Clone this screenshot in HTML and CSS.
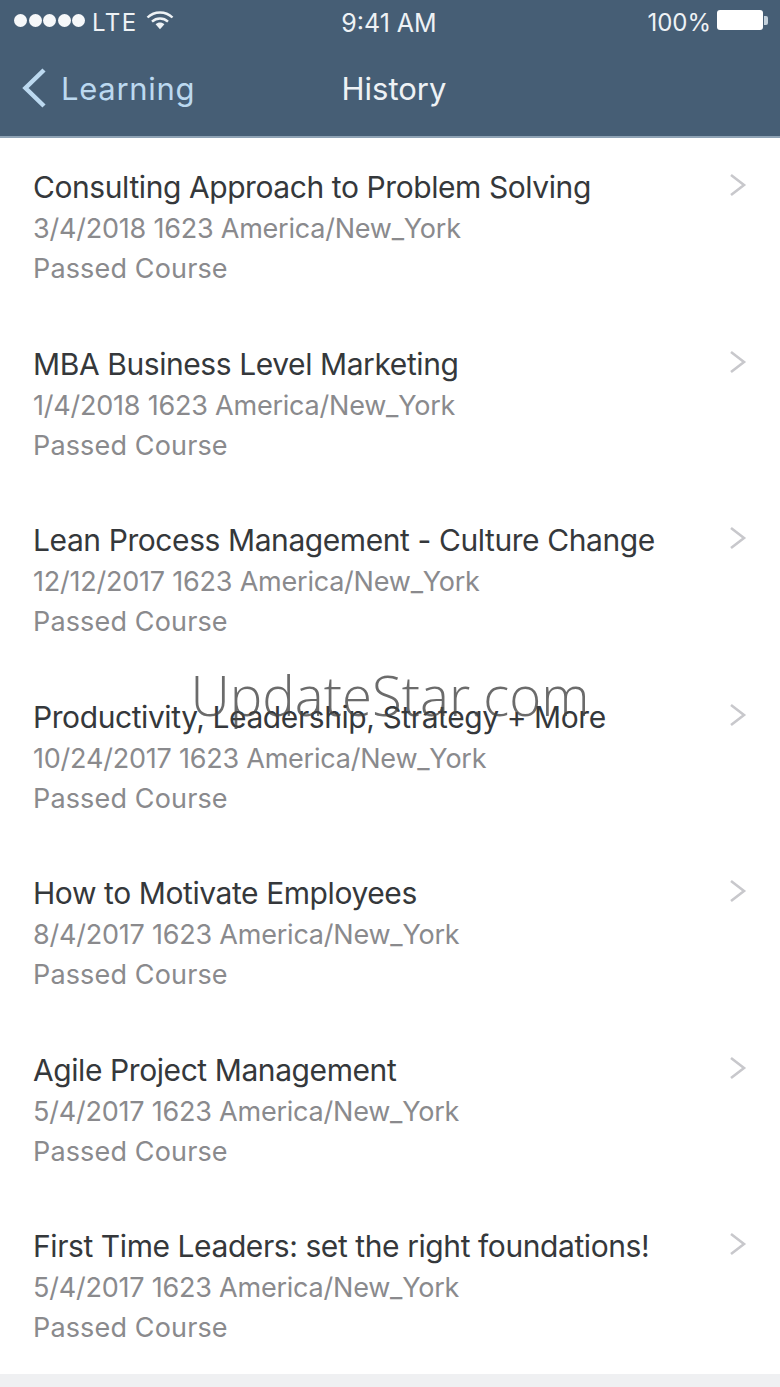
FILE: index.html
```html
<!DOCTYPE html>
<html lang="en">
<head>
  <meta charset="UTF-8" />
  <meta name="viewport" content="width=device-width, initial-scale=1.0" />
  <title>History</title>
  <link rel="stylesheet" href="styles.css">
</head>
<body>
  <div class="header">
    <!-- Status bar -->
    <div class="status-bar">
      <div class="status-left">
        <div class="signal"><span></span><span></span><span></span><span></span><span></span></div>
        <span class="carrier">LTE</span>
        <svg class="wifi" width="28" height="20" viewBox="0 0 28 20">
          <path d="M1.5 7.5C8.5 .8 19.5 .8 26.5 7.5" fill="none" stroke="#eef2f5" stroke-width="2.4"/>
          <path d="M6 11.6C10.6 7.4 17.4 7.4 22 11.6" fill="none" stroke="#eef2f5" stroke-width="2.4"/>
          <path d="M9.6 14.2C12.2 11.8 15.8 11.8 18.4 14.2L14 19.2Z" fill="#eef2f5"/>
        </svg>
      </div>
      <div class="status-time">9:41 AM</div>
      <div class="status-right">
        <span class="percent">100%</span>
        <div class="battery"><div class="battery-body"></div><div class="battery-tip"></div></div>
      </div>
    </div>

    <!-- Nav bar -->
    <div class="nav-bar">
      <div class="nav-back">
        <svg width="26" height="42" viewBox="0 0 26 42">
          <path d="M23 3L4.500 21L23 39" fill="none" stroke="#bcd9f0" stroke-width="4.500"/>
        </svg>
        <span>Learning</span>
      </div>
      <div class="nav-title">History</div>
    </div>
  </div>

  <div class="list">
    <div class="row">
      <div class="row-text">
        <div class="row-title">Consulting Approach to Problem Solving</div>
        <div class="row-date">3/4/2018 1623 America/New_York</div>
        <div class="row-status">Passed Course</div>
      </div>
      <svg class="chevron" width="18" height="24" viewBox="0 0 18 24"><path d="M2 2L15 12L2 22" fill="none" stroke="#c8c8cc" stroke-width="2.600"/></svg>
    </div>
    <div class="row">
      <div class="row-text">
        <div class="row-title">MBA Business Level Marketing</div>
        <div class="row-date">1/4/2018 1623 America/New_York</div>
        <div class="row-status">Passed Course</div>
      </div>
      <svg class="chevron" width="18" height="24" viewBox="0 0 18 24"><path d="M2 2L15 12L2 22" fill="none" stroke="#c8c8cc" stroke-width="2.600"/></svg>
    </div>
    <div class="row">
      <div class="row-text">
        <div class="row-title">Lean Process Management - Culture Change</div>
        <div class="row-date">12/12/2017 1623 America/New_York</div>
        <div class="row-status">Passed Course</div>
      </div>
      <svg class="chevron" width="18" height="24" viewBox="0 0 18 24"><path d="M2 2L15 12L2 22" fill="none" stroke="#c8c8cc" stroke-width="2.600"/></svg>
    </div>
    <div class="row">
      <div class="row-text">
        <div class="row-title">Productivity, Leadership, Strategy + More</div>
        <div class="row-date">10/24/2017 1623 America/New_York</div>
        <div class="row-status">Passed Course</div>
      </div>
      <svg class="chevron" width="18" height="24" viewBox="0 0 18 24"><path d="M2 2L15 12L2 22" fill="none" stroke="#c8c8cc" stroke-width="2.600"/></svg>
    </div>
    <div class="row">
      <div class="row-text">
        <div class="row-title">How to Motivate Employees</div>
        <div class="row-date">8/4/2017 1623 America/New_York</div>
        <div class="row-status">Passed Course</div>
      </div>
      <svg class="chevron" width="18" height="24" viewBox="0 0 18 24"><path d="M2 2L15 12L2 22" fill="none" stroke="#c8c8cc" stroke-width="2.600"/></svg>
    </div>
    <div class="row">
      <div class="row-text">
        <div class="row-title">Agile Project Management</div>
        <div class="row-date">5/4/2017 1623 America/New_York</div>
        <div class="row-status">Passed Course</div>
      </div>
      <svg class="chevron" width="18" height="24" viewBox="0 0 18 24"><path d="M2 2L15 12L2 22" fill="none" stroke="#c8c8cc" stroke-width="2.600"/></svg>
    </div>
    <div class="row">
      <div class="row-text">
        <div class="row-title">First Time Leaders: set the right foundations!</div>
        <div class="row-date">5/4/2017 1623 America/New_York</div>
        <div class="row-status">Passed Course</div>
      </div>
      <svg class="chevron" width="18" height="24" viewBox="0 0 18 24"><path d="M2 2L15 12L2 22" fill="none" stroke="#c8c8cc" stroke-width="2.600"/></svg>
    </div>
  </div>

  <div class="footer"></div>

  <div class="watermark">UpdateStar.com</div>
</body>
</html>
```

FILE: styles.css
```css
html, body {
  margin: 0;
  padding: 0;
  height: 100%;
  overflow: hidden;
  font-family: Inter, 'Liberation Sans', sans-serif;
  background: #fff;
}

.header {
  height: 136px;
  background: #465e75;
  border-bottom: 2px solid #8fa3b5;
  color: #eef2f5;
}

.status-bar {
  height: 45px;
  padding: 0 12px 0 14px;
  display: grid;
  grid-template-columns: 1fr auto 1fr;
  align-items: center;
}

.status-left {
  display: flex;
  align-items: center;
}

.signal {
  display: flex;
  gap: 1.500px;
  margin-top: -4px;
}

.signal span {
  width: 13px;
  height: 13px;
  border-radius: 50%;
  background: #f6f8fa;
}

.carrier {
  margin-left: 7px;
  font-size: 24px;
  letter-spacing: 1.500px;
}

.wifi {
  margin-left: 8px;
  margin-top: -5px;
}

.status-time {
  font-size: 25px;
  margin-right: 4px;
}

.status-right {
  display: flex;
  align-items: center;
  justify-content: flex-end;
}

.percent {
  font-size: 24px;
}

.battery {
  margin-left: 6px;
  margin-top: -5px;
  display: flex;
  align-items: center;
}

.battery-body {
  width: 46px;
  height: 20px;
  border-radius: 3px;
  background: #fff;
}

.battery-tip {
  width: 4px;
  height: 9px;
  margin-left: 1px;
  background: #c3d0db;
  border-radius: 0 2px 2px 0;
}

.nav-bar {
  position: relative;
  height: 91px;
  display: flex;
  align-items: center;
  justify-content: center;
  font-size: 31px;
}

.nav-back {
  position: absolute;
  left: 21px;
  top: 0;
  height: 86px;
  display: flex;
  align-items: center;
  gap: 14px;
  color: #bcd9f0;
  letter-spacing: 0.700px;
}

.nav-title {
  margin: 0 0 5px 8px;
}

.row {
  height: 176.5px;
  box-sizing: border-box;
  padding: 27px 33px 0 33px;
  display: flex;
  justify-content: space-between;
  align-items: flex-start;
}

.row-title {
  font-size: 30px;
  line-height: 44px;
  letter-spacing: -0.420px;
  color: #35383b;
}

.row-date, .row-status {
  font-size: 27px;
  line-height: 40px;
  color: #8a8a8d;
}

.row-date {
  letter-spacing: -0.220px;
}

.row-status {
  letter-spacing: 0.150px;
}

.chevron {
  margin-top: 8px;
}

.footer {
  height: 20px;
  background: #eff0f2;
}

.watermark {
  position: absolute;
  top: 659px;
  left: 0;
  width: 780px;
  text-align: center;
  font-family: 'Open Sans', sans-serif;
  font-weight: 300;
  font-size: 54.600px;
  line-height: 72px;
  color: rgba(70, 70, 70, 0.8);
}
```
